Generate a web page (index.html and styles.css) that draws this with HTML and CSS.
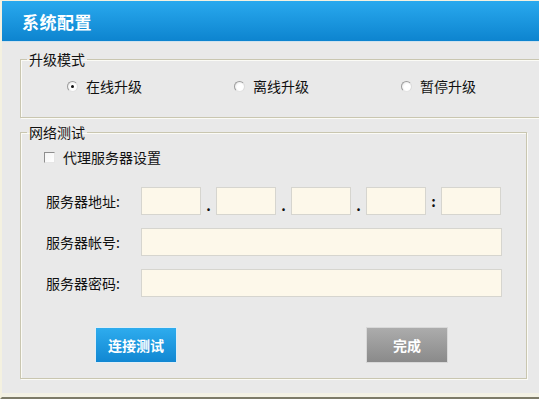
FILE: index.html
```html
<!DOCTYPE html>
<html lang="zh-CN">
<head>
    <meta charset="utf-8">
    <title>系统配置</title>
    <link rel="stylesheet" href="styles.css">
</head>
<body>
    <div class="frame">
        <div class="header"><h1 class="title">系统配置</h1></div>

        <div class="content">
            <fieldset class="group upgrade">
                <legend>升级模式</legend>
                <div class="radios">
                    <label class="opt"><span class="radio checked"></span>在线升级</label>
                    <label class="opt"><span class="radio"></span>离线升级</label>
                    <label class="opt"><span class="radio"></span>暂停升级</label>
                </div>
            </fieldset>

            <fieldset class="group network">
                <legend>网络测试</legend>
                <div class="inner">
                    <label class="check-row"><span class="checkbox"></span>代理服务器设置</label>

                    <div class="row">
                        <span class="label">服务器地址:</span>
                        <div class="ip">
                            <span class="box"></span><span class="sep">.</span>
                            <span class="box"></span><span class="sep">.</span>
                            <span class="box"></span><span class="sep">.</span>
                            <span class="box"></span><span class="sep colon">:</span>
                            <span class="box"></span>
                        </div>
                    </div>
                    <div class="row">
                        <span class="label">服务器帐号:</span>
                        <span class="box wide"></span>
                    </div>
                    <div class="row">
                        <span class="label">服务器密码:</span>
                        <span class="box wide"></span>
                    </div>

                    <div class="buttons">
                        <button class="btn blue">连接测试</button>
                        <button class="btn gray">完成</button>
                    </div>
                </div>
            </fieldset>
        </div>
    </div>
</body>
</html>
```

FILE: styles.css
```css
body {
    margin: 0;
    background: #e9e9e9;
    font-family: "Noto Sans CJK SC", "Liberation Sans", sans-serif;
    font-size: 14px;
    color: #111;
}

.frame {
    width: 539px;
    height: 399px;
    box-sizing: border-box;
    border-left: 2px solid #f4f1e0;
    border-bottom: 2px solid #7d7b68;
    box-shadow: inset 0 -4px 0 #f3f1e4;
}

/* 标题栏 */
.header {
    height: 42px;
    border-top: 1px solid #f4f1e0;
    box-sizing: border-box;
    background: linear-gradient(#29a9ee, #0d84cf);
    border-bottom: 1px solid #cfe2ee;
    display: flex;
    align-items: center;
    padding-left: 20px;
}

h1.title {
    margin: 0;
    color: white;
    font-size: 17px;
    font-weight: bold;
    letter-spacing: 0.5px;
}

.content {
    padding: 9px 12px 0 18px;
}

fieldset.group {
    margin: 0;
    border: 1px solid #c9c6b0;
    box-shadow: inset 1px 1px 0 #fbfbf6, 1px 1px 0 #fbfbf6;
    padding: 0;
}

fieldset.group legend {
    font-size: 14px;
    line-height: 16px;
    padding: 0 2px;
    margin-left: 6px;
}

.group.upgrade {
    height: 67px;
    box-sizing: border-box;
}

.radios {
    display: grid;
    grid-template-columns: 167px 167px 150px;
    padding: 11px 0 0 46px;
}

.opt {
    display: flex;
    align-items: center;
    gap: 8px;
    line-height: 16px;
}

.radio {
    width: 11px;
    height: 11px;
    border-radius: 50%;
    box-sizing: border-box;
    border: 1px solid #9d9d9d;
    border-right-color: #dcdcdc;
    border-bottom-color: #e4e4e4;
    background: radial-gradient(circle at 60% 60%, #ffffff 40%, #dedede);
    position: relative;
}

.radio.checked::after {
    content: "";
    position: absolute;
    left: 3px;
    top: 3px;
    width: 3px;
    height: 3px;
    border-radius: 50%;
    background: #111;
}

.group.network {
    margin-top: 6px;
    height: 255px;
    box-sizing: border-box;
}

.inner {
    padding-left: 23px;
}

.check-row {
    display: flex;
    align-items: center;
    gap: 8px;
    margin-top: 9px;
    line-height: 16px;
}

.checkbox {
    width: 11px;
    height: 11px;
    box-sizing: border-box;
    border: 1px solid #8e8e8e;
    border-right-color: #e6e6e6;
    border-bottom-color: #e6e6e6;
    background: linear-gradient(135deg, #f4f4f4, #ffffff);
}

.row {
    display: flex;
    align-items: center;
    height: 28px;
    margin-top: 13px;
}

.check-row + .row {
    margin-top: 22px;
}

.label {
    width: 97px;
    padding-left: 2px;
    box-sizing: border-box;
}

.ip {
    display: flex;
    align-items: center;
}

.box {
    display: block;
    width: 60px;
    height: 28px;
    box-sizing: border-box;
    background: #fdf8ea;
    border: 1px solid #d6d5cf;
}

.box.wide {
    width: 361px;
}

.sep {
    width: 15px;
    text-align: center;
    font-weight: bold;
    padding-top: 8px;
}

.sep.colon {
    padding-top: 0;
}

.buttons {
    display: flex;
    gap: 191px;
    padding-left: 52px;
    margin-top: 31px;
}

.btn {
    width: 80px;
    height: 34px;
    border: none;
    color: white;
    font-family: inherit;
    font-size: 14px;
    font-weight: bold;
}

.btn.blue {
    background: linear-gradient(#2eacee, #1187d2);
    box-shadow: 0 0 0 1px #dfeef7;
}

.btn.gray {
    background: linear-gradient(#acacac, #8a8a8a);
    box-shadow: 0 0 0 1px #d8d8d8;
}
```
